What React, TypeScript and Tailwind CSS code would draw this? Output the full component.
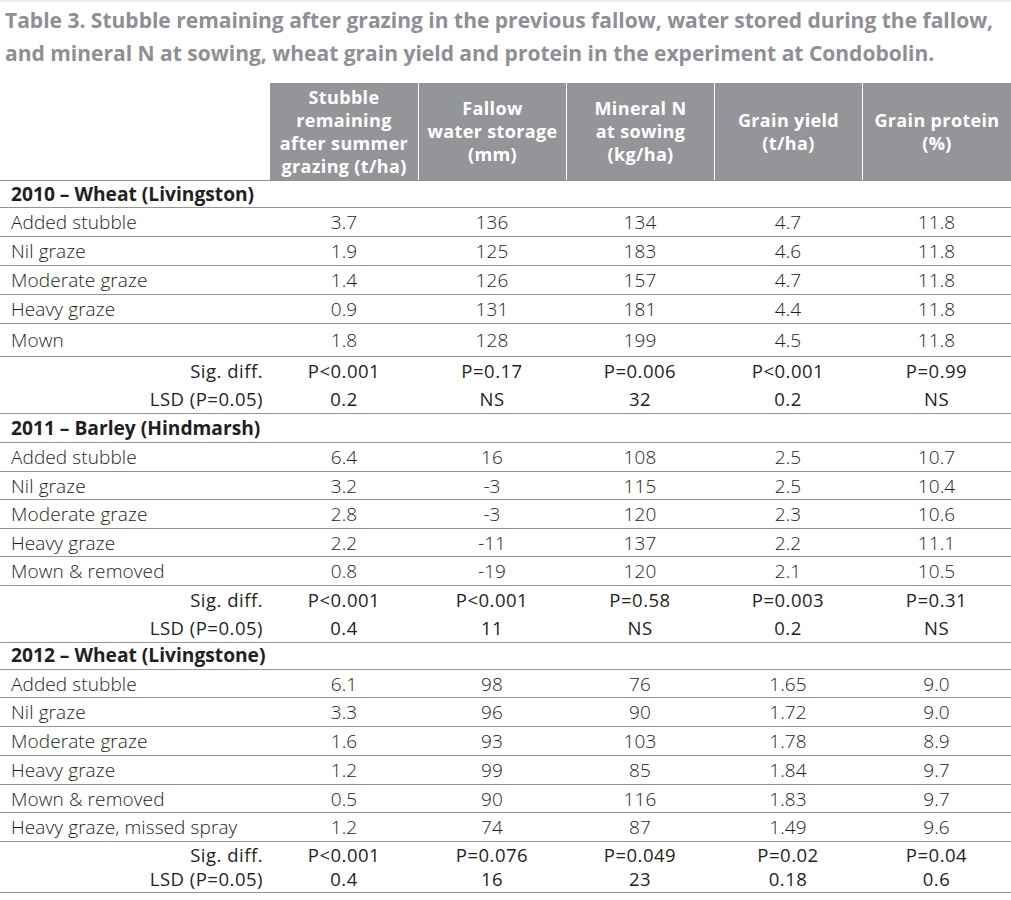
import React from "react";

const font = { fontFamily: '"Open Sans", "Noto Sans", sans-serif' };

type Row = [string, string, string, string, string, string];

type Section = {
  title: string;
  headH: string;
  rows: Row[];
  rowH: string[];
  sig: string[];
  lsd: string[];
  sigH: string;
  sigLine: string;
};

const sections: Section[] = [
  {
    title: "2010 – Wheat (Livingston)",
    headH: "h-[27px]",
    rows: [
      ["Added stubble", "3.7", "136", "134", "4.7", "11.8"],
      ["Nil graze", "1.9", "125", "183", "4.6", "11.8"],
      ["Moderate graze", "1.4", "126", "157", "4.7", "11.8"],
      ["Heavy graze", "0.9", "131", "181", "4.4", "11.8"],
      ["Mown", "1.8", "128", "199", "4.5", "11.8"],
    ],
    rowH: ["h-[29px]", "h-[29px]", "h-[29px]", "h-[29px]", "h-[33px]"],
    sig: ["P<0.001", "P=0.17", "P=0.006", "P<0.001", "P=0.99"],
    lsd: ["0.2", "NS", "32", "0.2", "NS"],
    sigH: "h-[57px]",
    sigLine: "leading-[28px]",
  },
  {
    title: "2011 – Barley (Hindmarsh)",
    headH: "h-[29px]",
    rows: [
      ["Added stubble", "6.4", "16", "108", "2.5", "10.7"],
      ["Nil graze", "3.2", "-3", "115", "2.5", "10.4"],
      ["Moderate graze", "2.8", "-3", "120", "2.3", "10.6"],
      ["Heavy graze", "2.2", "-11", "137", "2.2", "11.1"],
      ["Mown & removed", "0.8", "-19", "120", "2.1", "10.5"],
    ],
    rowH: ["h-[28.5px]", "h-[28.5px]", "h-[28.5px]", "h-[28.5px]", "h-[28.5px]"],
    sig: ["P<0.001", "P<0.001", "P=0.58", "P=0.003", "P=0.31"],
    lsd: ["0.4", "11", "NS", "0.2", "NS"],
    sigH: "h-[57px]",
    sigLine: "leading-[28px]",
  },
  {
    title: "2012 – Wheat (Livingstone)",
    headH: "h-[27px]",
    rows: [
      ["Added stubble", "6.1", "98", "76", "1.65", "9.0"],
      ["Nil graze", "3.3", "96", "90", "1.72", "9.0"],
      ["Moderate graze", "1.6", "93", "103", "1.78", "8.9"],
      ["Heavy graze", "1.2", "99", "85", "1.84", "9.7"],
      ["Mown & removed", "0.5", "90", "116", "1.83", "9.7"],
      ["Heavy graze, missed spray", "1.2", "74", "87", "1.49", "9.6"],
    ],
    rowH: ["h-[28.8px]", "h-[28.8px]", "h-[28.8px]", "h-[28.8px]", "h-[28.8px]", "h-[28.8px]"],
    sig: ["P<0.001", "P=0.076", "P=0.049", "P=0.02", "P=0.04"],
    lsd: ["0.4", "16", "23", "0.18", "0.6"],
    sigH: "h-[51px]",
    sigLine: "leading-[24px]",
  },
];

const headers = [
  ["Stubble", "remaining", "after summer", "grazing (t/ha)"],
  ["Fallow", "water storage", "(mm)"],
  ["Mineral N", "at sowing", "(kg/ha)"],
  ["Grain yield", "(t/ha)"],
  ["Grain protein", "(%)"],
];

const cols = "grid grid-cols-[270px_148px_148px_148px_148px_149px]";

export default function App() {
  return (
    <div className="w-[1011px] h-[900px] bg-white text-[#231f20] border-t-2 border-[#ececec]" style={font}>
      <div className="px-[5px] pt-[2px] text-[21px] font-bold leading-[33px] text-[#8e9095] whitespace-nowrap">
        <div>Table 3. Stubble remaining after grazing in the previous fallow, water stored during the fallow,</div>
        <div>and mineral N at sowing, wheat grain yield and protein in the experiment at Condobolin.</div>
      </div>

      <div className={`${cols} mt-[13px] h-[98px] border-b border-[#939598]`}>
        <div />
        {headers.map((lines, i) => (
          <div
            key={i}
            className={`bg-[#939598] flex flex-col items-center justify-center text-white font-bold text-[18px] leading-[23px] tracking-[0.35px] whitespace-nowrap ${i > 0 ? "border-l border-white" : ""}`}
          >
            {lines.map((l) => (
              <div key={l}>{l}</div>
            ))}
          </div>
        ))}
      </div>

      {sections.map((s) => (
        <div key={s.title}>
          <div className={`${s.headH} flex items-center px-[11px] font-bold text-[19.2px] border-b border-[#939598]`}>
            {s.title}
          </div>
          {s.rows.map((r, ri) => (
            <div key={ri} className={`${cols} ${s.rowH[ri]} items-center border-b border-[#939598] text-[19px] font-light tracking-[0.1px]`}>
              <div className="pl-[11px] whitespace-nowrap">{r[0]}</div>
              {r.slice(1).map((v, vi) => (
                <div key={vi} className="text-center">
                  {v}
                </div>
              ))}
            </div>
          ))}
          <div className={`${s.sigH} flex flex-col justify-center border-b border-[#939598] text-[18.5px] tracking-[0.5px] ${s.sigLine}`}>
            <div className={cols}>
              <div className="text-right pr-[7px]">Sig. diff.</div>
              {s.sig.map((v, i) => (
                <div key={i} className="text-center">
                  {v}
                </div>
              ))}
            </div>
            <div className={cols}>
              <div className="text-right pr-[7px]">LSD (P=0.05)</div>
              {s.lsd.map((v, i) => (
                <div key={i} className="text-center">
                  {v}
                </div>
              ))}
            </div>
          </div>
        </div>
      ))}
    </div>
  );
}
